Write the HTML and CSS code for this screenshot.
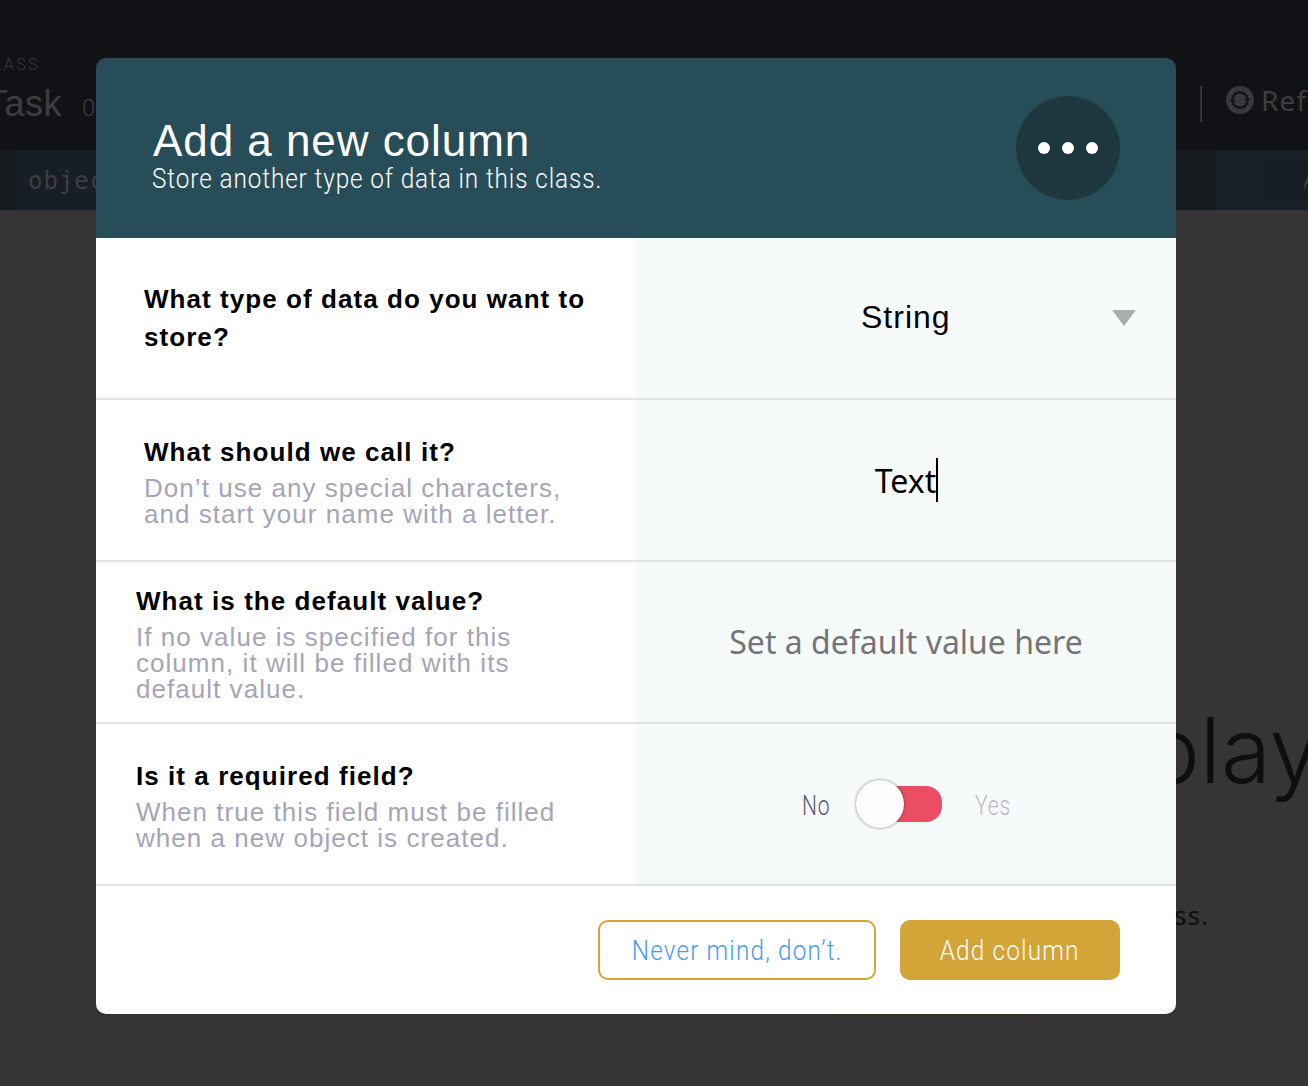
FILE: index.html
```html
<!DOCTYPE html>
<html lang="en">
<head>
<meta charset="utf-8">
<title>Add a new column</title>
<link rel="stylesheet" href="styles.css">
</head>
<body>
<div class="page">
  <header class="toolbar">
    <div class="heading">
      <div class="eyebrow">CLASS</div>
      <div class="class-row"><span class="class-name">Task</span><span class="count">0</span></div>
    </div>
    <div class="refresh">
      <svg class="refresh-icon" viewBox="0 0 28 28"><circle cx="14" cy="14" r="14" fill="#3a383b"/><path d="M6.8 11.5a7.6 7.6 0 0 1 14.6.8M21.2 16.5a7.6 7.6 0 0 1-14.6-.8" fill="none" stroke="#111215" stroke-width="2.4"/><path d="M4 15.6h5.6L6.2 11.6zM24 12.4h-5.6l3.4 4z" fill="#111215"/></svg>
      <span>Refresh</span>
    </div>
  </header>
  <div class="columns"><div class="column-id">objectId</div><div class="column-add"><div class="add-pill">A</div></div></div>
  <main class="empty">
    <div class="empty-title">play</div>
    <div class="empty-text">ss.</div>
    <div class="empty-action"></div>
  </main>
</div>
<div class="overlay">
  <section class="modal">
    <header class="modal-head">
      <div>
        <h1>Add a new column</h1>
        <p class="subtitle"><span class="narrow sub-text">Store another type of data in this class.</span></p>
      </div>
      <div class="more"><i></i><i></i><i></i></div>
    </header>
    <div class="row">
      <div class="label"><h2>What type of data do you want to store?</h2></div>
      <div class="field select"><span class="choice">String</span><svg class="arrow" viewBox="0 0 24 16"><path d="M0 0h24L12 16z" fill="#a9adae"/></svg></div>
    </div>
    <div class="row">
      <div class="label"><h2>What should we call it?</h2><p>Don’t use any special characters,<br>and start your name with a letter.</p></div>
      <div class="field"><span class="typed">Text</span><span class="caret"></span></div>
    </div>
    <div class="row">
      <div class="label wide"><h2>What is the default value?</h2><p>If no value is specified for this<br>column, it will be filled with its<br>default value.</p></div>
      <div class="field placeholder"><span>Set a default value here</span></div>
    </div>
    <div class="row">
      <div class="label wide"><h2>Is it a required field?</h2><p>When true this field must be filled<br>when a new object is created.</p></div>
      <div class="field toggle-field"><span class="narrow no">No</span><div class="toggle"><div class="knob"></div></div><span class="narrow yes">Yes</span></div>
    </div>
    <footer class="actions">
      <div class="button cancel"><span class="narrow">Never mind, don’t.</span></div>
      <div class="button confirm"><span class="narrow">Add column</span></div>
    </footer>
  </section>
</div>
</body>
</html>
```
FILE: styles.css
```css
* { box-sizing: border-box; }
body { margin: 0; width: 1308px; height: 1086px; overflow: hidden; background: #363437; font-family: "Liberation Sans", Arial, sans-serif; }
h1, h2, p { margin: 0; }
.page { height: 1086px; display: flex; flex-direction: column; overflow: hidden; }
.toolbar { height: 150px; flex: none; background: #111215; color: #3f3d40; display: flex; justify-content: space-between; overflow: hidden; }
.heading { margin-left: -20px; padding-top: 55px; }
.eyebrow { font: 300 16px/20px Roboto, sans-serif; letter-spacing: 2.4px; color: #39383b; }
.class-row { display: flex; align-items: baseline; margin-top: 9px; margin-left: 6px; }
.class-name { font-size: 36px; line-height: 40px; letter-spacing: .5px; }
.count { font: 300 24px/40px Roboto, sans-serif; margin-left: 20px; }
.refresh { width: 108px; height: 36px; margin-top: 86px; border-left: 2px solid #363437; padding-left: 24px; display: flex; align-items: flex-start; font: 28px/28px "Noto Sans", sans-serif; letter-spacing: 1.2px; }
.refresh-icon { width: 28px; height: 28px; flex: none; margin-right: 7px; }
.columns { height: 60px; flex: none; background: #151a1e; padding-left: 16px; display: flex; justify-content: space-between; }
.column-id { width: 300px; padding-left: 12px; background: #171e25; color: #3f3d40; font: 24px/63px "DejaVu Sans Mono", monospace; letter-spacing: 1px; }
.column-add { width: 92px; background: #181f27; padding: 10px 0 0 50px; overflow: hidden; }
.add-pill { width: 100px; height: 40px; border-radius: 10px; background: #161d25; color: #4a474b; padding-left: 37px; font: 300 24px/40px Roboto, sans-serif; }
.empty { flex: 1; padding: 480px 0 0 1145px; color: #0e0d10; overflow: hidden; }
.empty-title { font: 300 91px/120px Inter, "Liberation Sans", sans-serif; white-space: nowrap; }
.empty-text { font: 26px/32px "Noto Sans", sans-serif; letter-spacing: 1.2px; margin: 89px 0 0 29px; }
.empty-action { height: 60px; width: 220px; margin: 24px 0 0 -320px; border-radius: 10px; background: #3a2c16; }
.overlay { position: absolute; inset: 0; padding: 58px 0 0 96px; }
.modal { width: 1080px; height: 956px; border-radius: 10px; overflow: hidden; background: linear-gradient(#274e58 180px, #fff 180px); }
.modal-head { height: 180px; color: #fff; padding: 38px 56px 0; display: flex; justify-content: space-between; }
h1 { font-size: 44px; line-height: 50px; font-weight: 400; letter-spacing: .95px; padding: 20px 0 0 1px; white-space: nowrap; }
.narrow { display: inline-block; font-family: Roboto, sans-serif; font-weight: 300; white-space: nowrap; }
.subtitle { font-size: 27px; line-height: 28px; margin-top: -1px; }
.sub-text { transform: scaleX(.9); transform-origin: left; letter-spacing: 1px; }
.more { width: 104px; height: 104px; border-radius: 50%; background: #1e363e; display: flex; align-items: center; justify-content: center; gap: 12px; }
.more i { width: 12px; height: 12px; border-radius: 50%; background: #fff; }
.row { height: 162px; border-bottom: 2px solid #e2e3e4; display: flex; }
.label { width: 540px; padding-left: 48px; display: flex; flex-direction: column; justify-content: center; }
.label.wide { padding-left: 40px; }
h2 { font-size: 26px; line-height: 38px; letter-spacing: 1.06px; font-weight: 700; }
.label p { color: #a6a5b6; font-size: 26px; line-height: 26px; letter-spacing: 1.04px; padding-top: 4px; white-space: nowrap; }
.field { width: 540px; background: #f6fafb; display: flex; align-items: center; justify-content: center; font: 32px/44px "Noto Sans", sans-serif; color: #000; }
.select { font: 32px/44px "Liberation Sans", sans-serif; letter-spacing: 1px; padding: 0 40px 0 225px; justify-content: space-between; }
.choice { padding-bottom: 2px; }
.arrow { width: 24px; height: 16px; flex: none; }
.typed { padding-top: 1px; }
.caret { width: 2px; height: 44px; background: #000; margin-right: -1px; }
.placeholder { color: #757575; }
.toggle-field { font-size: 27px; }
.toggle-field .narrow { transform: scaleX(.78); transform-origin: left; letter-spacing: 1px; padding-top: 3px; }
.no { color: #5b5674; width: 28px; margin-right: 29px; }
.yes { color: #b9b9c2; width: 35px; margin-left: 32px; margin-right: 1px; }
.toggle { width: 84px; height: 36px; border-radius: 16px; background: #eb4d62; display: flex; align-items: center; margin-left: -1px; margin-right: 1px; }
.knob { width: 48px; height: 48px; flex: none; border-radius: 50%; background: #fdfbfd; box-shadow: 0 0 3px rgba(0,0,0,.5); margin-left: -2px; }
.actions { height: 128px; padding: 34px 56px 0 0; display: flex; justify-content: flex-end; gap: 24px; font-size: 27px; }
.button { height: 60px; border-radius: 10px; display: flex; align-items: center; justify-content: center; border: 2px solid #d3a437; padding-top: 2px; }
.button .narrow { letter-spacing: 1.3px; transform: scaleX(.9); }
.cancel { width: 278px; color: #4a9bea; }
.confirm { width: 220px; background: #d3a437; color: #fff; }
```
